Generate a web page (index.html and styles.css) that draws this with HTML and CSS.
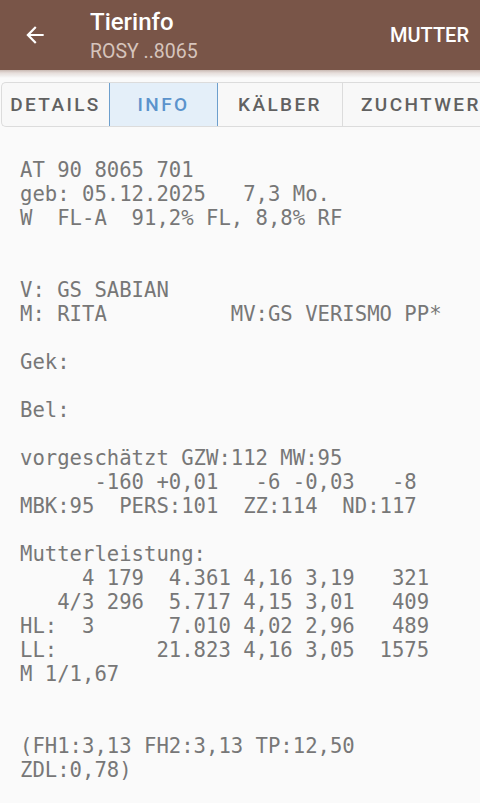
FILE: index.html
```html
<!DOCTYPE html>
<html>
<head>
<meta charset="utf-8">
<link rel="stylesheet" href="styles.css">
</head>
<body>
<header class="appbar">
  <div class="back">
    <svg width="26" height="26" viewBox="0 0 24 24"><path d="M20 11H7.83l5.59-5.59L12 4l-8 8 8 8 1.41-1.41L7.83 13H20v-2z" fill="#fff"/></svg>
  </div>
  <div class="titles">
    <div class="title">Tierinfo</div>
    <div class="subtitle">ROSY ..8065</div>
  </div>
  <div class="action">MUTTER</div>
</header>
<div class="shadow"></div>
<nav class="tabs">
  <div class="tab">DETAILS</div>
  <div class="tab active">INFO</div>
  <div class="tab">KÄLBER</div>
  <div class="tab sep">ZUCHTWERTE</div>
</nav>
<pre class="info">AT 90 8065 701
geb: 05.12.2025   7,3 Mo.
W  FL-A  91,2% FL, 8,8% RF


V: GS SABIAN
M: RITA          MV:GS VERISMO PP*

Gek:

Bel:

vorgeschätzt GZW:112 MW:95
      -160 +0,01   -6 -0,03   -8
MBK:95  PERS:101  ZZ:114  ND:117

Mutterleistung:
     4 179  4.361 4,16 3,19   321
   4/3 296  5.717 4,15 3,01   409
HL:  3      7.010 4,02 2,96   489
LL:        21.823 4,16 3,05  1575
M 1/1,67


(FH1:3,13 FH2:3,13 TP:12,50
ZDL:0,78)</pre>
</body>
</html>
```
FILE: styles.css
```css
html, body {
  margin: 0;
  padding: 0;
  background: #fafafa;
  width: 480px;
  height: 803px;
  overflow: hidden;
  font-family: Roboto, "Noto Sans", sans-serif;
}
.appbar {
  height: 70px;
  background: #795548;
  display: flex;
  align-items: center;
  color: #fff;
}
.back {
  width: 70px;
  display: flex;
  justify-content: center;
  align-items: center;
}
.back svg { display: block; }
.titles {
  flex: 1;
  align-self: stretch;
  padding-left: 20px;
  padding-top: 8px;
  display: flex;
  flex-direction: column;
}
.title {
  font-size: 24px;
  font-weight: 500;
  line-height: 28px;
}
.subtitle {
  font-size: 19.5px;
  line-height: 24px;
  color: #d6c4bc;
  margin-top: 4px;
}
.action {
  font-size: 20px;
  font-weight: 500;
  padding-right: 11px;
}
.shadow {
  height: 8px;
  background: linear-gradient(#c9b9b3 0px, #e6dedb 3px, #f0eeed 6px, #fafafa 8px);
}
.tabs {
  margin: 4px 0 0 1px;
  height: 43px;
  display: flex;
  border: 1px solid #dcdcdc;
  border-right: none;
  border-radius: 5px 0 0 5px;
  background: #f8f8f8;
  white-space: nowrap;
  overflow: hidden;
}
.tab {
  display: flex;
  align-items: center;
  justify-content: center;
  font-size: 19px;
  font-weight: 500;
  letter-spacing: 2.4px;
  color: #616161;
  flex: none;
}
.tab:nth-child(1) { width: 107px; }
.tab:nth-child(2) { width: 107px; }
.tab:nth-child(3) { width: 124px; }
.tab:nth-child(4) { justify-content: flex-start; padding-left: 18px; }
.tab.active {
  background: #e4eff9;
  border: 1px solid #6d9fcd;
  margin: -1px 0;
  color: #5b93cc;
}
.tab.sep { border-left: 1px solid #dcdcdc; }
.info {
  margin: 0;
  padding: 31px 0 0 20px;
  font-family: "DejaVu Sans Mono", monospace;
  font-size: 20.6px;
  line-height: 24px;
  color: #777;
}
```
